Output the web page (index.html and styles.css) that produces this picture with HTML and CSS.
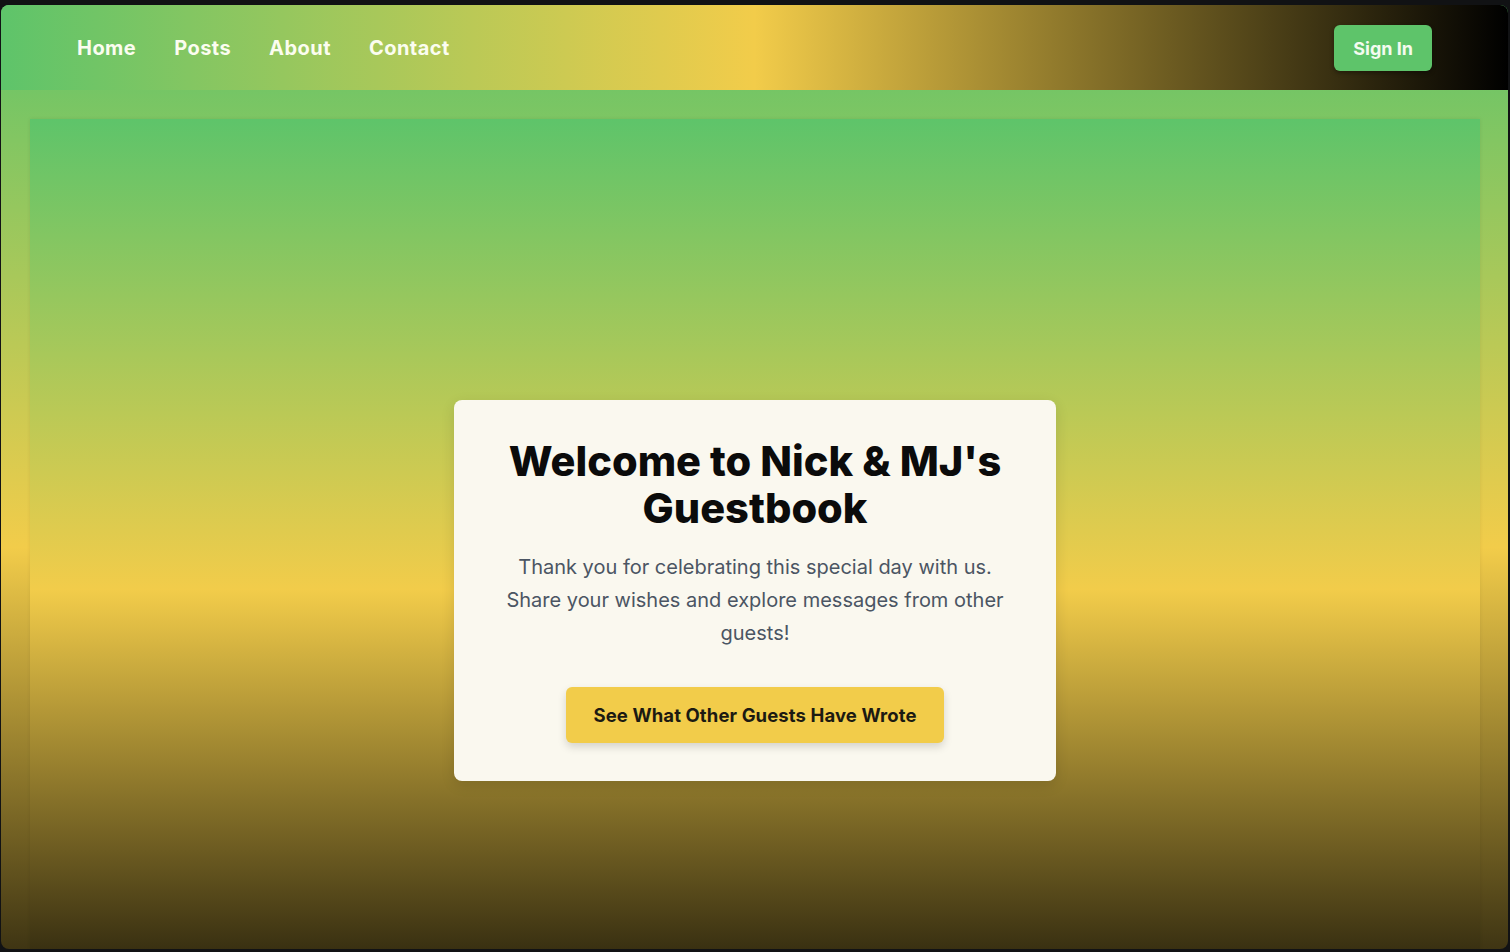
FILE: index.html
```html
<!DOCTYPE html>
<html lang="en">
<head>
<meta charset="utf-8">
<title>Nick &amp; MJ's Guestbook</title>
<link rel="stylesheet" href="styles.css">
</head>
<body>
<div class="window">
  <div class="page">
    <nav class="navbar">
      <ul class="nav-links">
        <li><a href="#">Home</a></li>
        <li><a href="#">Posts</a></li>
        <li><a href="#">About</a></li>
        <li><a href="#">Contact</a></li>
      </ul>
      <a class="sign-in" href="#">Sign In</a>
    </nav>
    <main class="main">
      <section class="hero">
        <div class="card">
          <h1 class="card-title">Welcome to Nick &amp; MJ's Guestbook</h1>
          <p class="card-text">Thank you for celebrating this special day with us. Share your wishes and explore messages from other guests!</p>
          <a class="cta" href="#">See What Other Guests Have Wrote</a>
        </div>
      </section>
    </main>
  </div>
</div>
</body>
</html>
```
FILE: styles.css
```css
* { box-sizing: border-box; }

html, body {
  margin: 0;
  padding: 0;
  height: 100%;
}

body {
  background: #111214;
  font-family: Inter, "Noto Sans", "Liberation Sans", sans-serif;
  overflow: hidden;
}

.window {
  margin: 5px 2px 3px 1px;
  height: 944px;
  border-radius: 8px;
  overflow: hidden;
}

.page {
  background: linear-gradient(to bottom, #5ec46a 0%, #f2cc4a 50%, #000000 100%);
}

.navbar {
  height: 85px;
  display: flex;
  align-items: center;
  justify-content: space-between;
  padding: 0 76px;
  background: linear-gradient(to right, #5ec46a 0%, #f2cc4a 50%, #000000 100%);
}

.nav-links {
  list-style: none;
  margin: 0;
  padding: 0;
  display: flex;
  gap: 38px;
}

.nav-links a {
  color: #fbfdf0;
  text-decoration: none;
  font-weight: 700;
  font-size: 20px;
  letter-spacing: 0.45px;
}

.sign-in {
  display: inline-flex;
  align-items: center;
  height: 46px;
  margin-top: 1px;
  padding: 0 19px;
  border-radius: 6px;
  background: #5ec46a;
  color: #f4fbef;
  font-weight: 700;
  font-size: 18px;
  text-decoration: none;
  box-shadow: 0 2px 4px rgba(0, 0, 0, 0.35);
}

.main {
  padding: 29px 28px 29px 29px;
}

.hero {
  min-height: 942px;
  display: flex;
  align-items: center;
  justify-content: center;
  background: linear-gradient(to bottom, #5ec46a 0%, #f2cc4a 50%, #000000 100%);
  box-shadow: 0 0 4px rgba(0, 0, 0, 0.08);
}

.card {
  width: 602px;
  padding: 38px 48px 38px;
  background: #faf8ef;
  border-radius: 8px;
  text-align: center;
  box-shadow: 0 4px 14px rgba(0, 0, 0, 0.12);
}

.card-title {
  margin: 0 0 19px;
  font-size: 41.5px;
  line-height: 47px;
  font-weight: 800;
  color: #0b0b0b;
  letter-spacing: 0;
}

.card-text {
  margin: 0 0 37px;
  font-size: 20px;
  line-height: 33px;
  color: #4b5563;
}

.cta {
  display: inline-flex;
  align-items: center;
  justify-content: center;
  width: 378px;
  height: 56px;
  border-radius: 6px;
  background: #f2cc4a;
  color: #1c1a12;
  font-weight: 700;
  font-size: 18.5px;
  letter-spacing: 0.1px;
  text-decoration: none;
  box-shadow: 0 4px 8px rgba(0, 0, 0, 0.15);
}
```
